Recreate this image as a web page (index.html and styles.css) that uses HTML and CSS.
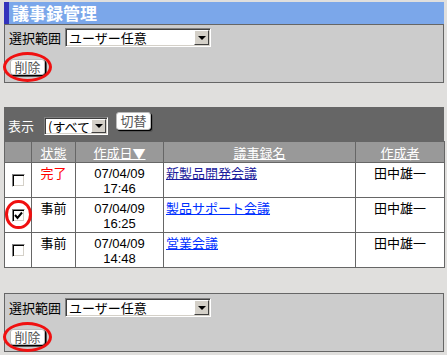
FILE: index.html
```html
<!DOCTYPE html>
<html lang="ja">
<head>
    <meta charset="UTF-8">
    <meta name="viewport" content="width=device-width, initial-scale=1.0">
    <title>議事録管理</title>
    <link rel="stylesheet" href="styles.css">
</head>
<body>
    <div class="page">
      <h1 class="title">議事録管理</h1>

      <div class="panel">
        <div class="range">
          <span class="label">選択範囲</span>
          <span class="combo combo-wide">
            <select><option>ユーザー任意</option></select>
            <span class="drop"></span>
          </span>
        </div>
        <div class="actions">
          <span class="mark mark-btn"><button class="btn btn-delete">削除</button></span>
        </div>
      </div>

      <div class="toolbar">
        <span class="toolbar-label">表示</span>
        <span class="combo combo-small">
          <select><option>(すべて)</option></select>
          <span class="drop"></span>
        </span>
        <button class="btn btn-switch">切替</button>
      </div>

      <table class="minutes">
        <colgroup>
          <col class="c-check">
          <col class="c-state">
          <col class="c-date">
          <col class="c-name">
          <col class="c-author">
        </colgroup>
        <thead>
          <tr>
            <th></th>
            <th><a href="#">状態</a></th>
            <th><a href="#">作成日▼</a></th>
            <th><a href="#">議事録名</a></th>
            <th><a href="#">作成者</a></th>
          </tr>
        </thead>
        <tbody>
          <tr>
            <td class="cell-check"><span class="chk"></span></td>
            <td class="state done">完了</td>
            <td class="date">07/04/09<br>17:46</td>
            <td><a href="#" class="visited">新製品開発会議</a></td>
            <td class="author">田中雄一</td>
          </tr>
          <tr>
            <td class="cell-check">
              <span class="mark mark-chk"><span class="chk">
                <svg width="9" height="9" viewBox="0 0 9 9"><polyline points="1,4 3.5,7 8,1.5" fill="none" stroke="#000" stroke-width="2"/></svg>
              </span></span>
            </td>
            <td class="state">事前</td>
            <td class="date">07/04/09<br>16:25</td>
            <td><a href="#">製品サポート会議</a></td>
            <td class="author">田中雄一</td>
          </tr>
          <tr>
            <td class="cell-check"><span class="chk"></span></td>
            <td class="state">事前</td>
            <td class="date">07/04/09<br>14:48</td>
            <td><a href="#">営業会議</a></td>
            <td class="author">田中雄一</td>
          </tr>
        </tbody>
      </table>

      <div class="panel panel-bottom">
        <div class="range">
          <span class="label">選択範囲</span>
          <span class="combo combo-wide">
            <select><option>ユーザー任意</option></select>
            <span class="drop"></span>
          </span>
        </div>
        <div class="actions">
          <span class="mark mark-btn"><button class="btn btn-delete">削除</button></span>
        </div>
      </div>
    </div>
</body>
</html>
```

FILE: styles.css
```css
body {
  margin: 0;
  background: #e0dfdd;
  font-family: "Noto Sans CJK JP", "DejaVu Sans", sans-serif;
  font-size: 13px;
  color: #000;
}

.page {
  width: 440px;
  padding: 2px 0 0 4px;
}

.title {
  margin: 0;
  height: 22px;
  line-height: 22px;
  padding-left: 3px;
  border-left: 5px solid #3333bb;
  background: #7ba7ea;
  color: #fff;
  font-size: 17px;
  font-weight: bold;
}

.panel {
  box-sizing: border-box;
  height: 59px;
  padding: 3px 4px 0;
  background: #cccccc;
  border: 1px solid #666;
}

.panel-bottom {
  margin-top: 25px;
  padding-top: 4px;
}

.range {
  display: flex;
  align-items: center;
  gap: 4px;
  height: 19px;
}

.label {
  line-height: 19px;
}

.combo {
  box-sizing: border-box;
  display: inline-flex;
  align-items: stretch;
  background: #fff;
  border: 1px solid;
  border-color: #808080 #fff #fff #808080;
  box-shadow: inset 1px 1px 0 #404040, inset -1px -1px 0 #d4d0c8;
  padding: 1px;
}

.combo select {
  appearance: none;
  -webkit-appearance: none;
  flex: 1;
  min-width: 0;
  border: 0;
  outline: 0;
  background: transparent;
  font: inherit;
  color: #000;
  padding: 0 2px;
  line-height: 15px;
}

.combo-wide {
  width: 146px;
  height: 19px;
}

.combo-small {
  width: 64px;
  height: 18px;
  margin-top: 10px;
}

.drop {
  box-sizing: border-box;
  width: 15px;
  background: #d4d0c8;
  border: 1px solid;
  border-color: #fff #404040 #404040 #fff;
  display: flex;
  align-items: center;
  justify-content: center;
}

.drop::before {
  content: "";
  border-left: 4px solid transparent;
  border-right: 4px solid transparent;
  border-top: 4px solid #000;
}

.actions {
  margin-top: 10px;
  padding-left: 1px;
}

.btn {
  box-sizing: border-box;
  height: 16px;
  padding: 0;
  background: #fff;
  color: #555;
  font: inherit;
  line-height: 12px;
  white-space: nowrap;
  border: 1px solid #bbb;
  border-radius: 3px;
  box-shadow: 1px 1px 0 #000, 2px 2px 0 #555;
  cursor: pointer;
}

.btn-delete {
  width: 35px;
}

.btn-switch {
  width: 35px;
  height: 18px;
  margin: 5px 0 0 8px;
  line-height: 14px;
}

.mark {
  position: relative;
  display: inline-block;
  vertical-align: top;
}

.mark::after {
  content: "";
  position: absolute;
  border: 3px solid #f01010;
  border-radius: 50%;
  pointer-events: none;
}

.mark-btn::after {
  left: -7px;
  right: -7px;
  top: -5px;
  bottom: -6px;
}

.mark-chk::after {
  left: -7px;
  right: -7px;
  top: -8px;
  bottom: -7px;
}

.toolbar {
  margin-top: 24px;
  box-sizing: border-box;
  height: 34px;
  padding: 0 4px;
  background: #666;
  display: flex;
  align-items: flex-start;
}

.toolbar-label {
  color: #fff;
  line-height: 16px;
  margin-top: 11px;
  margin-right: 10px;
}

.minutes {
  width: 440px;
  table-layout: fixed;
  border-collapse: collapse;
  border: 1px solid #666;
  background: #fff;
}

.c-check { width: 27px; }
.c-state { width: 44px; }
.c-date { width: 88px; }
.c-name { width: 192px; }
.c-author { width: 89px; }

.minutes th {
  background: #999;
  border: 1px solid #666;
  border-top: 0;
  padding: 3px 0 2px;
  line-height: 15px;
  font-weight: normal;
  text-align: center;
}

.minutes th a {
  color: #fff;
}

.minutes td {
  border: 1px solid #666;
  padding: 3px 2px;
  line-height: 14px;
  vertical-align: top;
  white-space: nowrap;
}

.minutes td.date {
  font-family: "Liberation Sans", "Noto Sans CJK JP", sans-serif;
  line-height: 15px;
  padding: 3px 2px 1px;
}

.minutes td a {
  color: #0030ff;
}

.minutes td a.visited {
  color: #1c1c9c;
}

.cell-check {
  text-align: center;
  vertical-align: middle !important;
}

.state,
.date,
.author {
  text-align: center;
}

.done {
  color: #ff0000;
}

.chk {
  box-sizing: border-box;
  display: inline-flex;
  align-items: center;
  justify-content: center;
  width: 13px;
  height: 13px;
  background: #fff;
  border: 1px solid;
  border-color: #808080 #fff #fff #808080;
  box-shadow: inset 1px 1px 0 #000, inset -1px -1px 0 #d4d0c8;
  vertical-align: middle;
}

.chk svg {
  display: block;
}
```
